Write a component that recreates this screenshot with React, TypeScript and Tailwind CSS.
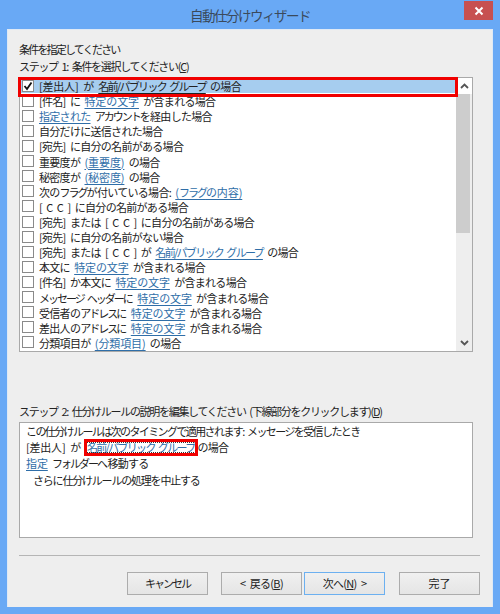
import React from 'react';

const FONT = '"Noto Sans CJK JP", "Liberation Sans", sans-serif';

const Lnk: React.FC<{ children: React.ReactNode }> = ({ children }) => (
    <span className="text-[#2f6ea8] underline underline-offset-2 tracking-[-0.1px]">{children}</span>
);

// katakana runs are much narrower in the original UI font
const K: React.FC<{ children: React.ReactNode }> = ({ children }) => (
    <span className="tracking-[-2px]">{children}</span>
);

const Prefix: React.FC = () => <span className="tracking-[-0.2px]">[差出人] が</span>;

const rows: React.ReactNode[] = [
    <><Prefix /> <span className="underline underline-offset-2 tracking-[-1.7px]">名前/パブリック グループ</span> の場合</>,
    <>[件名] に <Lnk>特定の文字</Lnk> が含まれる場合</>,
    <><Lnk><span className="tracking-[-0.7px]">指定された</span></Lnk> <K>アカウント</K>を経由した場合</>,
    <>自分だけに送信された場合</>,
    <>[宛先] に自分の名前がある場合</>,
    <>重要度が <Lnk>(重要度)</Lnk> の場合</>,
    <>秘密度が <Lnk>(秘密度)</Lnk> の場合</>,
    <>次の<K>フラグ</K>が付いている場合: <Lnk>(<K>フラグ</K>の内容)</Lnk></>,
    <>[ C C ] に自分の名前がある場合</>,
    <>[宛先] または [ C C ] に自分の名前がある場合</>,
    <>[宛先] に自分の名前がない場合</>,
    <>[宛先] または [ C C ] が <Lnk><span className="tracking-[-1.7px]">名前/パブリック グループ</span></Lnk> の場合</>,
    <>本文に <Lnk>特定の文字</Lnk> が含まれる場合</>,
    <>[件名] か本文に <Lnk>特定の文字</Lnk> が含まれる場合</>,
    <><K>メッセージ ヘッダー</K>に <Lnk>特定の文字</Lnk> が含まれる場合</>,
    <>受信者の<K>アドレス</K>に <Lnk>特定の文字</Lnk> が含まれる場合</>,
    <>差出人の<K>アドレス</K>に <Lnk>特定の文字</Lnk> が含まれる場合</>,
    <>分類項目が <Lnk>(分類項目)</Lnk> の場合</>,
];

const Btn: React.FC<{ children: React.ReactNode; active?: boolean; className?: string }> = ({ children, active, className }) => (
    <div
        className={`h-[23px] w-[81px] flex items-center justify-center whitespace-pre text-[11px] leading-none text-[#222] bg-gradient-to-b from-[#f0f0f0] to-[#e5e5e5] border ${
            active ? 'border-[#6cb0f0]' : 'border-[#acacac]'
        } ${className || ''}`}
    >
        {children}
    </div>
);

export default function App() {
    return (
        <div className="w-[500px] h-[614px] bg-[#69a9f5] flex flex-col overflow-hidden" style={{ fontFamily: FONT }}>
            {/* Title bar */}
            <div className="h-[29px] relative flex items-center justify-center text-[13.5px] tracking-[-1.5px] text-[#3a4a5c] shrink-0">
                <span className="pt-[2px]">自動仕分けウィザード</span>
                <div className="absolute right-[7px] top-[1px] w-[29px] h-[19px] bg-[#c75050] flex items-center justify-center">
                    <svg width="10" height="10" viewBox="0 0 10 10">
                        <path d="M1.5 1.5 L8.5 8.5 M8.5 1.5 L1.5 8.5" stroke="#fff" strokeWidth="2" />
                    </svg>
                </div>
            </div>

            {/* Client area */}
            <div className="ml-[7px] w-[486px] h-[578px] bg-[#eeeeee] border-t border-x border-[#dfe9f5] pl-[11px] pr-[11px] flex flex-col text-[11px] tracking-[-0.7px] [word-spacing:2.5px] text-[#222] leading-none">
                <div className="mt-[11px] h-[16px] flex items-center tracking-[-1.8px]">条件を指定してください</div>
                <div className="h-[18px] flex items-center tracking-[-1.3px] whitespace-pre">
                    ステップ 1: 条件を選択してください(<span className="underline">C</span>)
                </div>

                {/* Rule list */}
                <div className="mt-[2px] h-[275px] w-[454px] bg-white border border-[#a9a9a9] flex relative shrink-0">
                    <div className="flex-1 min-w-0 flex flex-col">
                        {rows.map((r, i) => (
                            <div
                                key={i}
                                className={`h-[15.12px] shrink-0 flex items-center whitespace-nowrap pl-[2px] ${i === 0 ? 'bg-[#a6cdef]' : ''}`}
                            >
                                <span className="w-[12px] h-[12px] mr-[5px] border border-[#8a8a8a] bg-white shrink-0 flex items-center justify-center">
                                    {i === 0 && (
                                        <svg width="10" height="10" viewBox="0 0 10 10">
                                            <path d="M1.5 5 L4 8 L8.5 1.5" stroke="#111" strokeWidth="1.8" fill="none" />
                                        </svg>
                                    )}
                                </span>
                                <span className="block h-[15px] leading-[17px]">{r}</span>
                            </div>
                        ))}
                    </div>
                    {/* Scrollbar */}
                    <div className="w-[16px] shrink-0 bg-[#eeeeee] flex flex-col">
                        <div className="h-[16px] bg-white flex items-center justify-center shrink-0">
                            <svg width="9" height="6" viewBox="0 0 9 6">
                                <path d="M1 5 L4.5 1.5 L8 5" stroke="#555" strokeWidth="1.8" fill="none" />
                            </svg>
                        </div>
                        <div className="h-[139px] w-[14px] bg-[#cdcdcd] shrink-0" />
                        <div className="flex-1" />
                        <div className="h-[16px] flex items-center justify-center shrink-0">
                            <svg width="9" height="6" viewBox="0 0 9 6">
                                <path d="M1 1 L4.5 4.5 L8 1" stroke="#555" strokeWidth="1.8" fill="none" />
                            </svg>
                        </div>
                    </div>
                    {/* Red highlight on the first row */}
                    <div className="absolute left-[-2px] top-[-1px] w-[440px] h-[20px] border-[3px] border-[#f00000]" />
                </div>

                <div className="mt-[51px] h-[16px] flex items-center tracking-[-1.3px] whitespace-pre">
                    ステップ 2: 仕分けルールの説明を編集してください (下線部分をクリックします)(<span className="underline">D</span>)
                </div>

                {/* Rule description */}
                <div className="mt-[3px] h-[116px] w-[454px] bg-white border border-[#a9a9a9] pl-[6px] flex flex-col shrink-0">
                    <div className="h-[16px] flex items-center whitespace-pre tracking-[-1.6px]">この仕分けルールは次のタイミングで適用されます: メッセージを受信したとき</div>
                    <div className="h-[16px] flex items-center whitespace-pre">
                        <Prefix />
                        <span className="relative ml-[6px] mr-[3px] tracking-[-1.7px]">
                            <span className="text-[#2f6ea8] underline underline-offset-2">名前/パブリック グループ</span>
                            <span className="absolute left-[-1px] right-[-1px] top-0 bottom-0 border border-dotted border-[#333]" />
                            <span className="absolute left-[-3px] right-[-3px] top-[-3px] bottom-[-3px] border-[3px] border-[#f00000]" />
                        </span>
                        の場合
                    </div>
                    <div className="h-[17px] leading-[17px] whitespace-pre">
                        <Lnk>指定</Lnk> <K>フォルダー</K>へ移動する
                    </div>
                    <div className="h-[16px] flex items-center whitespace-nowrap pl-[7px] tracking-[-1.2px]">さらに仕分けルールの処理を中止する</div>
                </div>

                <div className="mt-[17px] w-[461px] h-[1px] bg-[#b5b5b5] shrink-0" />

                {/* Buttons */}
                <div className="mt-[16px] w-[461px] flex justify-end shrink-0">
                    <Btn><K>キャンセル</K></Btn>
                    <Btn className="ml-[13px]">&lt; 戻る(<span className="underline">B</span>)</Btn>
                    <Btn active className="ml-[2px]">次へ(<span className="underline">N</span>) &gt;</Btn>
                    <Btn className="ml-[14px] tracking-normal">完了</Btn>
                </div>
            </div>
        </div>
    );
}
